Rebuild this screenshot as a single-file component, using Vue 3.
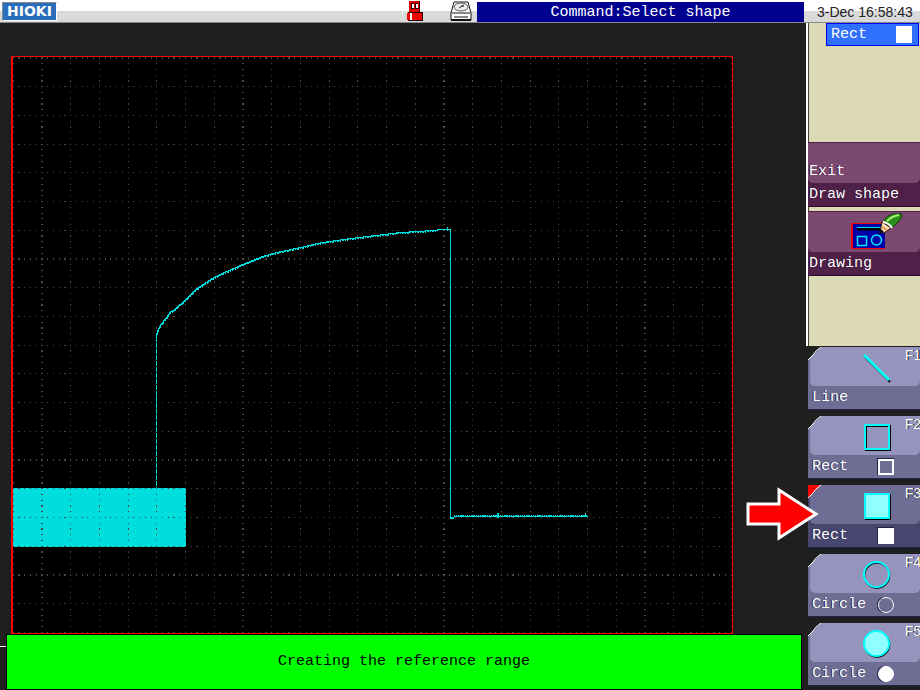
<script setup>
const SCALE = 1.1487
const span = (value) => {
  const start = Math.floor(value)
  return [start, Math.floor(value + SCALE) - start]
}
const column = (p) => span(p * SCALE + 2.17)
const row = (q) => span(q * SCALE + 1.94)

const dot = (p, q) => {
  const [x, w] = column(p)
  const [y, h] = row(q)
  return `M${x} ${y}h${w}v${h}h${-w}z`
}

// Division lines every 25 units, dotted every 5 units.
const buildGrid = () => {
  const parts = []
  for (let q = 0; q <= 500; q += 5) {
    for (let p = 0; p <= 625; p += 5) {
      if (q % 25 === 0 || p % 25 === 0) parts.push(dot(p, q))
    }
  }
  return parts.join('')
}
const grid = buildGrid()

const rise = [
  [145, 281], [147, 275], [150, 269], [155, 263], [159, 257], [164, 254],
  [175, 244], [185, 234], [197, 226], [203, 222], [216, 216], [232, 209],
  [252, 201], [266, 197], [290, 192], [306, 188], [319, 186], [340, 183],
  [356, 181], [374, 179], [389, 177], [408, 176], [421, 175], [431, 174], [439, 174]
]

const buildTrace = () => {
  let path = ''
  for (let i = 0; i < rise.length - 1; i++) {
    const [x0, y0] = rise[i]
    const [x1, y1] = rise[i + 1]
    for (let x = x0; x < x1; x++) {
      const a = Math.round(y0 + ((y1 - y0) * (x - x0)) / (x1 - x0))
      const b = Math.round(y0 + ((y1 - y0) * (x + 1 - x0)) / (x1 - x0))
      const extra = (x * 7) % 5 < 2 || x > 425 ? 0 : 1
      path += `M${x} ${b - 1}h1v${a - b + 1 + extra}h-1z`
    }
  }
  for (let x = 443; x < 577; x++) {
    const low = (x * 5) % 11 < 7 ? 1 : 0
    path += `M${x} ${460 - low}h1v${1 + low}h-1z`
  }
  return path
}
const trace = buildTrace()

const keys = [
  { id: 'F1', label: 'Line', icon: 'line' },
  { id: 'F2', label: 'Rect', icon: 'rect' },
  { id: 'F3', label: 'Rect', icon: 'rect', filled: true, active: true },
  { id: 'F4', label: 'Circle', icon: 'circle' },
  { id: 'F5', label: 'Circle', icon: 'circle', filled: true }
]
</script>

<template>
  <div class="screen">
    <header class="top">
      <div class="logo">HIOKI</div>
      <div class="status">
        <svg class="usb" width="22" height="22" viewBox="0 0 22 22" shape-rendering="crispEdges">
          <path d="M1 3v13M0 9h3" stroke="#fff" fill="none" />
          <path d="M8 1h11v11h-11z" fill="#300" />
          <path d="M8 1h10v11h-10z" fill="#e00000" />
          <path d="M10 3h3v6h-3zM14 3h3v6h-3z" fill="#300" />
          <path d="M11 4h2v4h-2zM15 4h2v4h-2z" fill="#fff" />
          <path d="M7 12h15v9h-15z" fill="#200" />
          <path d="M6 13h15v7h-15z" fill="#f00000" />
          <path d="M9 13h2v7h-2z" fill="#fff" />
        </svg>
        <svg class="disk" width="22" height="22" viewBox="0 0 22 22">
          <path d="M4 2h14l3 11v7H1v-7z" fill="#fff" stroke="#111" />
          <ellipse cx="11" cy="7" rx="7" ry="4" fill="#eee" stroke="#555" />
          <path d="M9 8l5-3M11 6h3" stroke="#333" fill="none" />
          <path d="M2 13h18M4 17h14" stroke="#111" stroke-width="1" />
          <path d="M1 20h20" stroke="#111" stroke-width="2" />
        </svg>
      </div>
      <h1 class="title">Command:Select shape</h1>
      <time class="clock">3-Dec 16:58:43</time>
    </header>

    <div class="body">
      <main class="main">
        <svg class="plot" viewBox="0 0 722 578" shape-rendering="crispEdges">
          <path d="M0 0h722v578h-722z" fill="#000" />
          <path d="M2 432h173v59h-173z" fill="#00dddd" />
          <path :d="grid" fill="#484848" />
          <path d="M145.5 281v151" stroke="#00dddd" stroke-dasharray="5 1" />
          <path :d="trace" fill="#00dddd" />
          <path d="M439 173h1v290h-1zM440 461h3v2h-3z" fill="#00dddd" />
          <path d="M436 171h1v4h-1zM486 457h2v5h-2zM574 457h1v3h-1z" fill="#00dddd" />
          <path d="M0 0h722v578h-722zM2 1v576h719v-576z" fill="#ff0000" fill-rule="evenodd" />
        </svg>
        <div class="footer">
          <i class="tick"></i>
          <p class="message">Creating the reference range</p>
        </div>
      </main>

      <aside class="side">
        <div class="panel">
          <div class="chip"><span>Rect</span><i class="swatch"></i></div>
          <button class="menu" type="button">
            <span class="face"><span>Exit</span></span>
            <span class="caption">Draw shape</span>
          </button>
          <button class="menu" type="button">
            <span class="face">
              <svg class="draw" width="54" height="38" viewBox="0 0 54 38">
                <path d="M0 11h34v26h-34z" fill="#f00000" />
                <path d="M2 12h32v24h-32z" fill="#0000a8" />
                <path d="M6 17h24" stroke="#000" stroke-width="3" />
                <path d="M6 15.500h24" stroke="#00e8ff" />
                <path d="M6.500 24.500h9v9h-9z" fill="none" stroke="#00e8ff" stroke-width="1.500" />
                <circle cx="25.500" cy="28" r="5" fill="none" stroke="#00e8ff" stroke-width="1.500" />
                <path d="M29 20l2-10 9 6-7 5z" fill="#ffe0b8" stroke="#301008" />
                <path d="M31 15l5 3" stroke="#e89048" stroke-width="2" />
                <path d="M27 22l3-5 3 3z" fill="#101010" />
                <path d="M32 10q4-7 10-8h9q1 4-10 14z" fill="#289018" stroke="#104000" />
                <path d="M36 9q5-5 12-6" stroke="#a8f078" stroke-width="2" fill="none" />
                <path d="M32 10q6 1 9 6" stroke="#fff" stroke-width="2" fill="none" />
              </svg>
            </span>
            <span class="caption">Drawing</span>
          </button>
        </div>

        <nav class="keys">
          <div v-for="key in keys" :key="key.id" class="slot">
            <button type="button" class="key" :class="{ active: key.active }">
              <svg class="corner" width="13" height="13" viewBox="0 0 13 13">
                <path class="fold" d="M0 0h13l-13 13z" />
                <path d="M13 0l-5 4-3 4-5 5" fill="none" stroke="#fff" />
              </svg>
              <span class="face">
                <svg class="icon" width="28" height="29" viewBox="0 0 28 29">
                  <g v-if="key.icon === 'line'" fill="none">
                    <path d="M2 3l25 25" stroke="#000" stroke-width="2" />
                    <path d="M1 1l25 25" stroke="#00ffff" stroke-width="3" />
                  </g>
                  <g v-else-if="key.icon === 'rect'">
                    <path d="M3 3h24v24h-24z" fill="none" stroke="#000" stroke-width="2" />
                    <path d="M2 2h24v24h-24z" :fill="key.filled ? '#90ffff' : 'none'" stroke="#00ffff" stroke-width="2" />
                  </g>
                  <g v-else>
                    <circle cx="14" cy="14.500" r="12.500" fill="none" stroke="#000" stroke-width="1.500" />
                    <circle cx="13.500" cy="13.500" r="12.500" :fill="key.filled ? '#90ffff' : 'none'" stroke="#00ffff" stroke-width="2" />
                  </g>
                </svg>
                <kbd>{{ key.id }}</kbd>
              </span>
              <span class="caption">
                <span>{{ key.label }}</span>
                <svg v-if="key.icon !== 'line'" width="18" height="18" viewBox="0 0 18 18">
                  <g v-if="key.icon === 'rect'">
                    <path class="shade" d="M1 1h15v15h-15z" />
                    <path d="M2 2h14v14h-14z" :fill="key.filled ? '#fff' : 'none'" stroke="#fff" stroke-width="2" />
                  </g>
                  <g v-else>
                    <path class="shade" d="M6 2q-5 2-5 7t5 7" />
                    <circle cx="9" cy="9" r="7.500" :fill="key.filled ? '#fff' : 'none'" stroke="#fff" />
                  </g>
                </svg>
              </span>
            </button>
            <svg v-if="key.active" class="pointer" width="73" height="54" viewBox="0 0 73 54">
              <path d="M2 17h31v-14l37 24-37 24v-14h-31z" fill="#ff0000" stroke="#fff" stroke-width="3" />
            </svg>
          </div>
        </nav>
      </aside>
    </div>
  </div>
</template>

<style>
body {
  background: #1f1f1f;
}
</style>

<style scoped>
.screen {
  overflow: hidden;
  background: #1f1f1f;
  color: #fff;
  font: 15px/20px "Liberation Mono", monospace;
}
.top {
  display: flex;
  height: 23px;
  box-sizing: border-box;
  border-bottom: 1px solid #888;
  background: linear-gradient(#fff 11px, #d9d9d9 11px);
}
.logo {
  box-sizing: border-box;
  width: 55px;
  height: 19px;
  margin: 2px;
  border: 1px solid #888;
  border-right-color: #fff;
  border-bottom-color: #fff;
  background: #2a6ebb;
  font: bold 14px/17px "DejaVu Sans", sans-serif;
  text-align: center;
}
.status {
  display: flex;
  gap: 27px;
  margin-left: auto;
  padding-right: 5px;
}
.title {
  flex: 0 0 327px;
  height: 20px;
  margin: 2px 0 0;
  background: #000090;
  font-size: 15px;
  line-height: 22px;
  font-weight: normal;
  text-align: center;
}
.clock {
  flex: 0 0 116px;
  box-sizing: border-box;
  padding: 2px 0 0 13px;
  color: #222;
  font: 14px/20px "Liberation Sans", sans-serif;
}
.body {
  display: flex;
}
.main {
  flex: 1;
  min-width: 0;
  padding-top: 33px;
}
.plot {
  display: block;
  box-sizing: border-box;
  width: 100%;
  padding: 0 73px 0 11px;
}
.footer {
  display: flex;
  padding-right: 4px;
}
.tick {
  width: 6px;
  height: 1px;
  margin-top: 12px;
  background: #fff;
}
.message {
  flex: 1;
  margin: 0;
  padding: 17px 0;
  border: 1px solid #000;
  background: #00ff00;
  color: #000;
  text-align: center;
}
.side {
  flex: 0 0 114px;
  min-width: 0;
}
.panel {
  display: flex;
  flex-direction: column;
  gap: 4px;
  box-sizing: border-box;
  padding-bottom: 70px;
  border-left: 2px solid #fff;
  background: #dcdab5;
  box-shadow: inset 1px 0 #444;
}
.chip {
  display: flex;
  align-items: center;
  justify-content: space-between;
  box-sizing: border-box;
  height: 23px;
  margin: 0 1px 92px 18px;
  padding: 0 6px 0 4px;
  border: 1px solid #0000ee;
  background: #3070ff;
  line-height: 22px;
}
.swatch {
  width: 16px;
  height: 17px;
  background: #fff;
}
button {
  display: block;
  width: 100%;
  margin: 0;
  padding: 0;
  border: 0;
  color: #fff;
  font: inherit;
  text-align: left;
}
.face,
.caption {
  display: flex;
  box-sizing: border-box;
}
.menu {
  height: 65px;
  border-bottom: 1px solid #2a0826;
  background: #4f2048;
  text-shadow: -1px 0 #2a0826;
}
.menu .face {
  align-items: flex-end;
  height: 40px;
  padding: 0 0 1px 1px;
  border-radius: 0 0 5px 5px;
  background: #7b4870;
}
.menu .caption {
  padding: 2px 0 0 1px;
}
.draw {
  margin: 0 0 1px 42px;
}
.keys {
  display: flex;
  flex-direction: column;
  gap: 6px;
  padding: 1px 0 3px 2px;
}
.slot {
  position: relative;
}
.key {
  position: relative;
  height: 63px;
  border-bottom: 1px solid #22224a;
  background: #6e6e94;
  text-shadow: -1px 0 #22224a;
}
.key .face {
  height: 39px;
  margin-left: 2px;
  padding: 7px 0 0 53px;
  border-radius: 0 0 5px 5px;
  background: #9494bc;
}
.key.active {
  background: #46466e;
}
.key.active .face {
  background: #6e6e94;
}
.corner {
  position: absolute;
  top: 0;
  left: 0;
}
.fold {
  fill: #1f1f1f;
}
.active .fold {
  fill: #ff0000;
}
.icon {
  flex: none;
}
kbd {
  margin: -6px 0 0 14px;
  font: 14px/14px "Liberation Sans", sans-serif;
  text-shadow: 1px 0 #000;
}
.key .caption {
  align-items: center;
  justify-content: space-between;
  height: 24px;
  padding: 0 25px 0 4px;
  line-height: 24px;
}
.shade {
  fill: none;
  stroke: #22224a;
  stroke-width: 2;
}
.pointer {
  position: absolute;
  top: 2px;
  left: -62px;
}
</style>
